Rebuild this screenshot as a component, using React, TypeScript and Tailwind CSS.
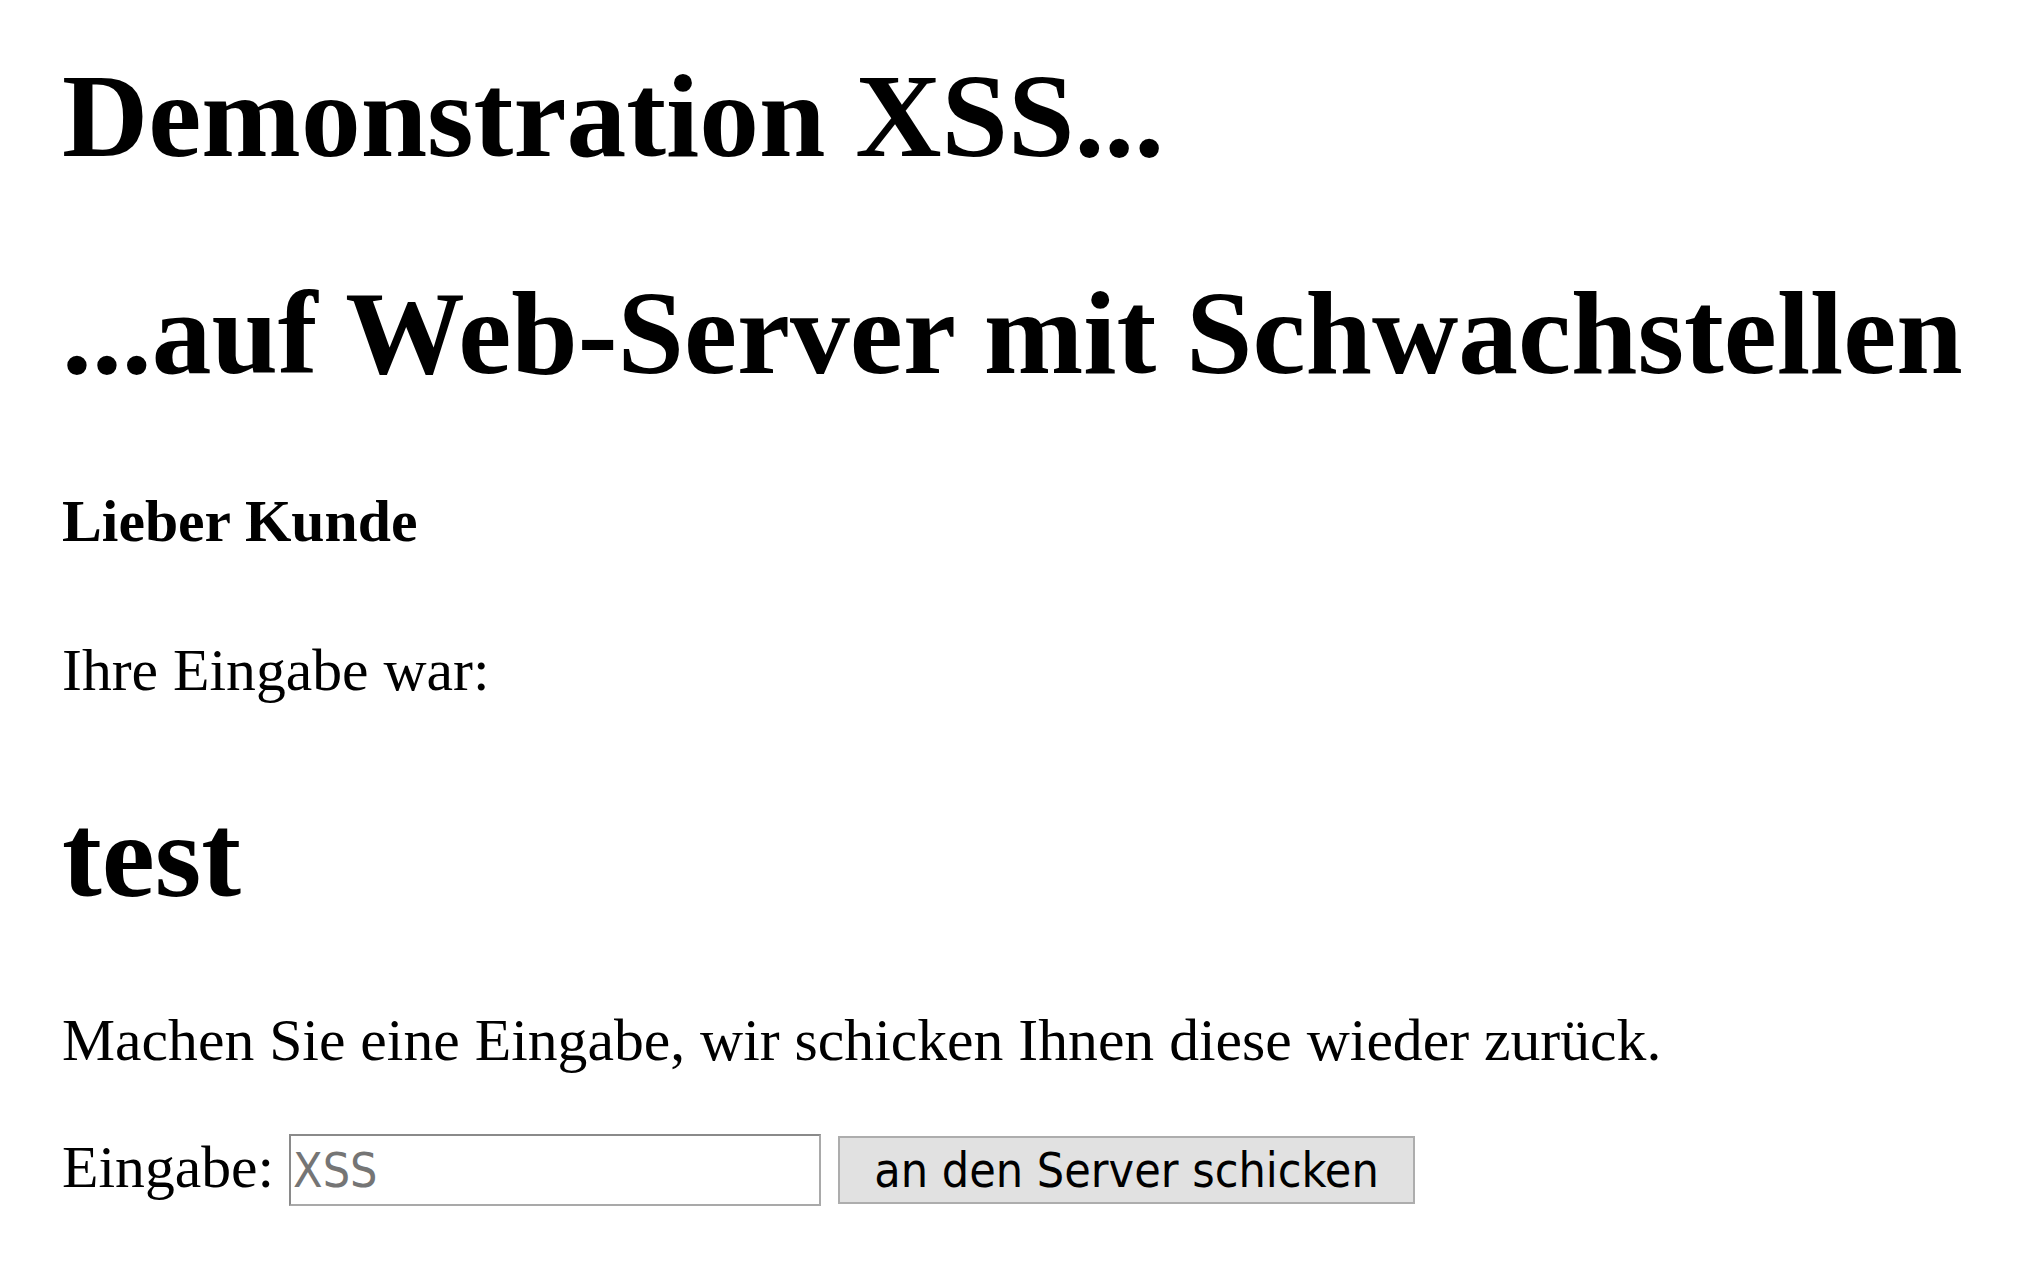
export default function App() {
  return (
    <div className="min-h-screen bg-white text-black font-['Liberation_Serif','Times_New_Roman',serif] leading-[normal] pl-[62px] pt-[48px]">
      <h1 className="text-[119.5px] font-bold m-0 leading-[normal]">Demonstration XSS...</h1>
      <h1 className="text-[119.5px] font-bold mt-[80px] leading-[normal]">...auf Web-Server mit Schwachstellen</h1>
      <h4 className="text-[59.7px] font-bold mt-[85px] leading-[normal]">Lieber Kunde</h4>
      <p className="text-[59.7px] mt-[80px] leading-[normal]">Ihre Eingabe war:</p>
      <h1 className="text-[119.5px] font-bold mt-[83px] leading-[normal]">test</h1>
      <p className="text-[59.7px] mt-[81px] leading-[normal]">
        Machen Sie eine Eingabe, wir schicken Ihnen diese wieder zurück.
      </p>
      <form className="text-[59.7px] mt-[58px] leading-[normal]" onSubmit={(e) => e.preventDefault()}>
        Eingabe:{" "}
        <input
          type="text"
          name="eingabe"
          placeholder="XSS"
          className="inline-block align-baseline box-border w-[532px] h-[72px] border-2 border-solid border-t-[#8a8a8a] border-l-[#8a8a8a] border-r-[#a9a9a9] border-b-[#a9a9a9] bg-white px-[2px] py-0 text-[48px] leading-[normal] text-black font-['DejaVu_Sans_Condensed','DejaVu_Sans',sans-serif] font-stretch-semi-condensed placeholder:text-[#757575] outline-none"
        />{" "}
        <button
          type="button"
          className="inline-block align-baseline box-border ml-[2px] w-[577px] h-[68px] border-2 border-solid border-[#adadad] bg-[#e1e1e1] px-[6px] py-0 text-[48px] leading-[normal] text-black text-center font-['DejaVu_Sans_Condensed','DejaVu_Sans',sans-serif] font-stretch-semi-condensed"
        >
          an den Server schicken
        </button>
      </form>
    </div>
  );
}
